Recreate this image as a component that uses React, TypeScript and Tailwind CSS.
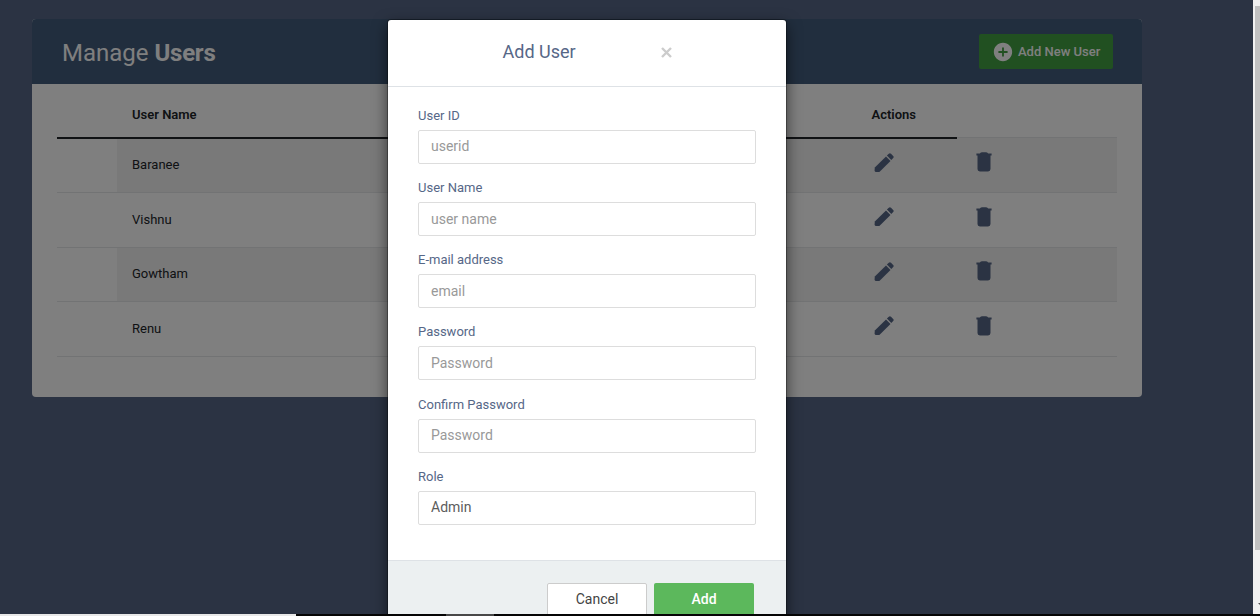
import React from "react";
import { MdAddCircle } from "react-icons/md";

const users = ["Baranee", "Vishnu", "Gowtham", "Renu"];

const fields = [
  { label: "User ID", placeholder: "userid", type: "text" },
  { label: "User Name", placeholder: "user name", type: "text" },
  { label: "E-mail address", placeholder: "email", type: "text" },
  { label: "Password", placeholder: "Password", type: "password" },
  { label: "Confirm Password", placeholder: "Password", type: "password" },
];

const inputClass =
  "block h-[34px] w-full appearance-none rounded-[2px] border border-[#dddddd] bg-white px-3 pb-[1.2px] text-[14px] text-[#5c5c5c] outline-none placeholder:text-[#999]";

function PencilIcon() {
  return (
    <svg viewBox="0 0 20 20" className="h-5 w-5 fill-[#566787]">
      <path d="M0.8 14.6 12 3.4l4.5 4.5L5.4 19H2.2Q.6 19 .6 17.4z" />
      <path d="M12.9 2.6 14.8.7q1.1-1 2.2 0l2.2 2.2q1 1.1 0 2.2l-1.9 1.9z" />
    </svg>
  );
}

function TrashIcon() {
  return (
    <svg viewBox="0 0 16 20" className="h-5 w-4 fill-[#566787]">
      <path d="M.4 1.4h3.4q1-1.2 2.4-1.2h3.6q1.4 0 2.4 1.2h3.4v2H.4z" />
      <path d="M1.5 3h13v14.1q0 2.4-2.4 2.4H3.9q-2.4 0-2.4-2.4z" />
    </svg>
  );
}

function UsersPanel() {
  return (
    <section className="ml-8 mt-[19px] h-[378px] w-[1110px] overflow-hidden rounded-[4px] bg-white">
      <header className="flex h-[65px] items-center justify-between bg-[#435d7d] pl-[30px] pr-[29px] text-white">
        <h2 className="pt-[3px] text-[24px] leading-[30px]">
          Manage <b className="tracking-[-0.25px]">Users</b>
        </h2>
        <button className="flex h-[35px] w-[134px] items-center whitespace-nowrap rounded-[2px] bg-[#43a043] pl-[13px] text-[13px] font-medium">
          <MdAddCircle size={22} className="mr-1 shrink-0" />
          Add New User
        </button>
      </header>
      <div className="px-[25px] text-[13px] text-[#212529]">
        <div className="grid h-[55px] w-[900px] grid-cols-[60px_740px_100px] items-center border-b-2 border-[#212529] pt-[9px] font-semibold">
          <span />
          <span className="pl-[15px]">User Name</span>
          <span className="pl-[14.5px]">Actions</span>
        </div>
        <div className="-mt-[0.4px]">
          {users.map((name, i) => (
            <div
              key={name}
              className="grid h-[54.5px] grid-cols-[60px_740px_100px_160px] border-b border-[#e4e6e8]"
            >
              <span />
              <span className={i % 2 ? "flex items-center pb-[1px] pl-[15px]" : "flex items-center bg-[#f2f2f2] pb-[1px] pl-[15px]"}>
                {name}
              </span>
              <span className={i % 2 ? "pl-[16.5px] pt-[14px]" : "bg-[#f2f2f2] pl-[16.5px] pt-[14px]"}>
                <PencilIcon />
              </span>
              <span
                className={
                  i % 2
                    ? "pl-[19px] pt-[13.4px]"
                    : i === 0
                      ? "-mt-[1.6px] border-t border-[#e4e6e8] bg-[#f2f2f2] pl-[19px] pt-[14px]"
                      : "bg-[#f2f2f2] pl-[19px] pt-[13.4px]"
                }
              >
                <TrashIcon />
              </span>
            </div>
          ))}
        </div>
      </div>
    </section>
  );
}

function AddUserDialog() {
  return (
    <form className="w-[398px] overflow-hidden rounded-[3px] bg-white text-[#566787] shadow-[0_0_0_1px_rgba(0,0,0,0.3),0_5px_15px_rgba(0,0,0,0.6)]">
      <header className="flex h-[67px] items-center border-b border-[#dee2e6] pb-[3px] pl-[114.5px]">
        <h4 className="w-[158px] text-[18px]">Add User</h4>
        <button type="button" aria-label="Close" className="mt-[2px] text-[#cccccc]">
          <svg viewBox="0 0 11 11" className="h-[11px] w-[11px] fill-none stroke-current stroke-[2.4]">
            <path d="m1 1 9 9M10 1l-9 9" />
          </svg>
        </button>
      </header>
      <div className="flex h-[473px] flex-col gap-[18.15px] px-[30px] pt-[19px]">
        {fields.map((f) => (
          <label key={f.label} className="block text-[13px] leading-[19.7px]">
            <span className="block">{f.label}</span>
            <input className={inputClass + " mt-[4.3px] mb-[-4px]"} type={f.type} placeholder={f.placeholder} />
          </label>
        ))}
        <label className="block text-[13px] leading-[19.7px]">
          <span className="block">Role</span>
          <input className={inputClass + " mt-[4.3px]"} defaultValue="Admin" />
        </label>
      </div>
      <footer className="flex h-[90px] gap-[7px] border-t border-[#dee2e6] bg-[#ecf0f1] pl-[159px] pt-[22px] text-[14px]">
        <button type="button" className="h-[34px] w-[100px] rounded-[2px] border border-[#cccccc] bg-white pb-[2px] text-[#444]">
          Cancel
        </button>
        <button type="button" className="h-[34px] w-[100px] rounded-[2px] bg-[#5cb85c] pb-[2px] font-medium text-white">
          Add
        </button>
      </footer>
    </form>
  );
}

export default function App() {
  return (
    <div className="relative flex h-[616px] w-[1260px] flex-col overflow-hidden font-[Roboto,sans-serif]">
      <div className="flex min-h-0 flex-1">
        <main className="relative w-[1253px] overflow-hidden bg-[#566787]">
          <UsersPanel />
          <div className="absolute inset-0 bg-black/50 pl-[388px] pt-5">
            <AddUserDialog />
          </div>
        </main>
        <div className="flex w-[7px] flex-col overflow-hidden bg-[#f1f1f1] pl-[2px] pt-[6px]">
          <div className="h-[544px] shrink-0 bg-[#c1c1c1]" />
          <svg viewBox="0 0 8 4" className="ml-[3px] mt-[53px] h-[4px] w-[8px] shrink-0 fill-[#505050]">
            <path d="M0 0h8L4 4z" />
          </svg>
        </div>
      </div>
      <div className="flex h-[2px] shrink-0 bg-[#050505]">
        <span className="w-[296px] bg-[#e8e8e8]" />
        <span className="ml-[150px] w-[48px] bg-[#484848]" />
      </div>
    </div>
  );
}
